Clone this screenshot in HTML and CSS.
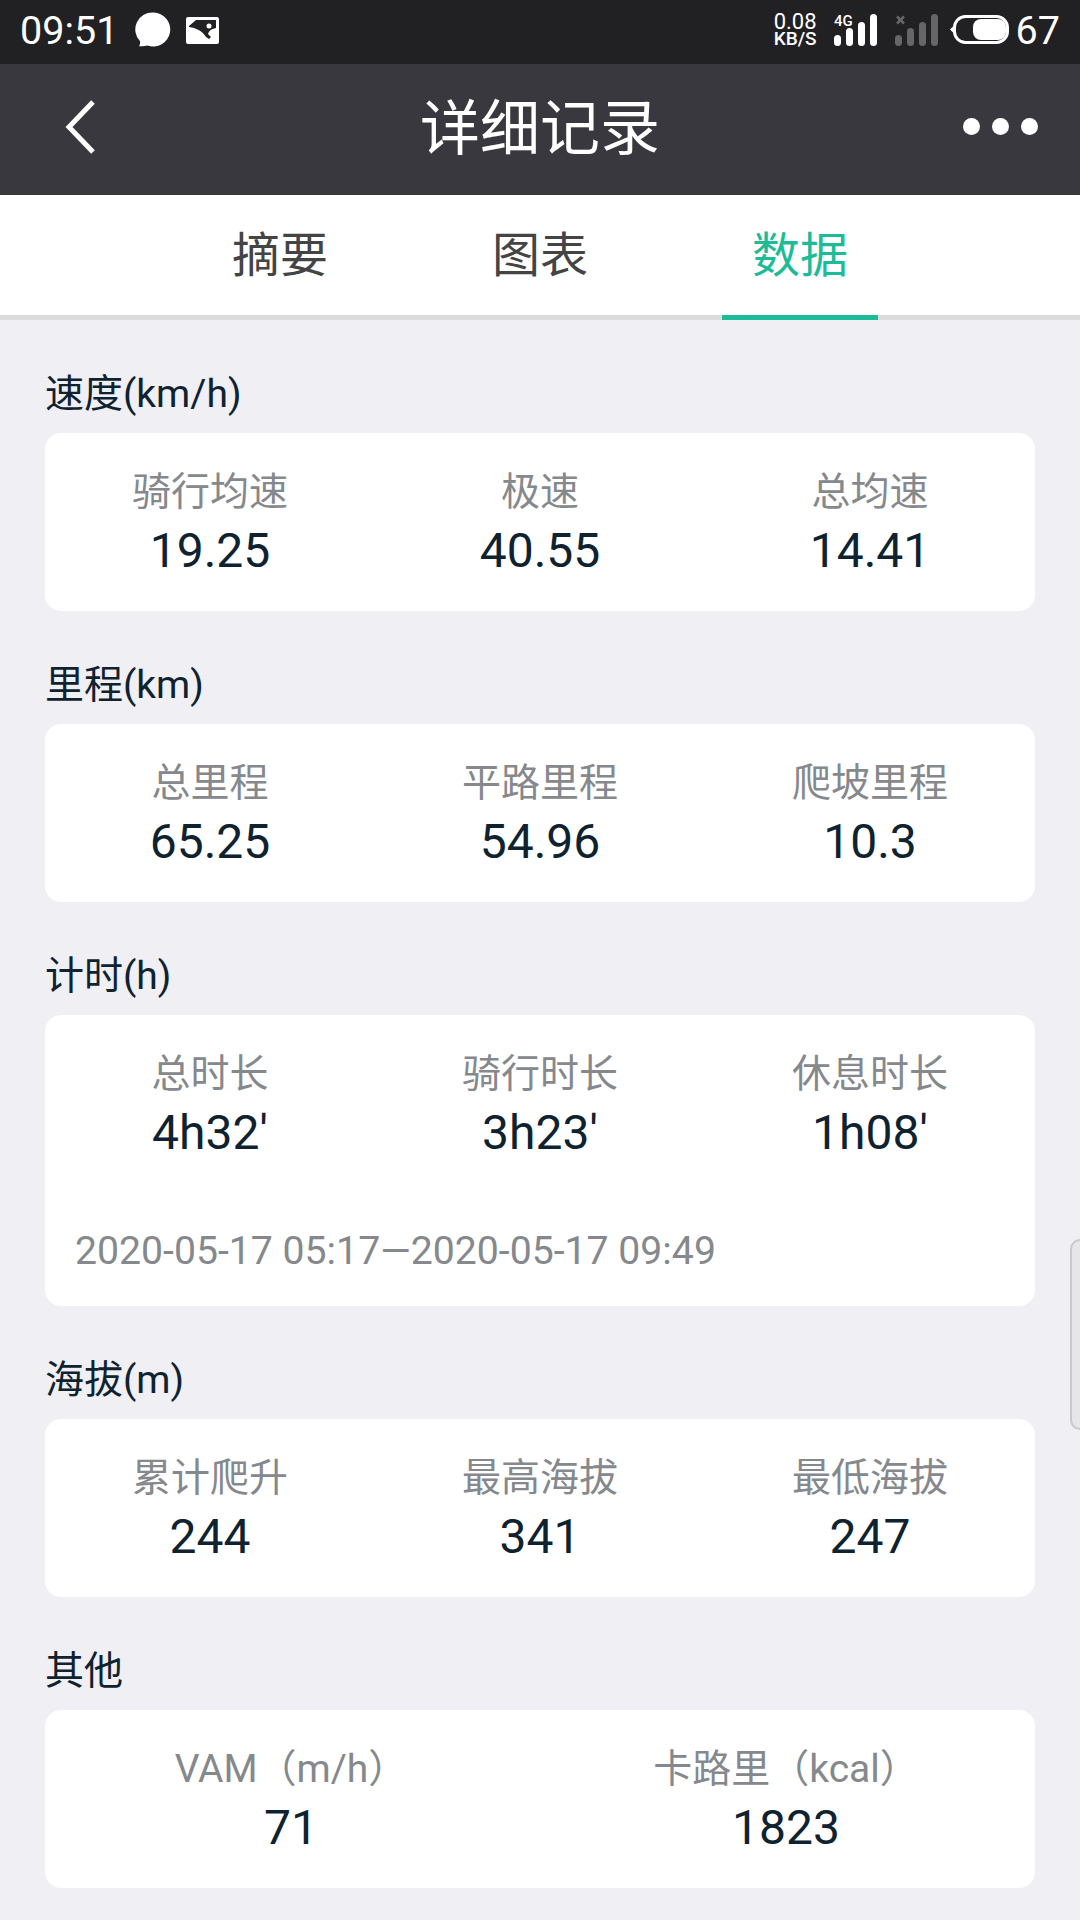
FILE: index.html
```html
<!DOCTYPE html>
<html lang="zh-CN">
<head>
    <meta charset="UTF-8">
    <meta name="viewport" content="width=device-width, initial-scale=1.0">
    <title>详细记录</title>
    <link rel="stylesheet" href="styles.css">
</head>
<body>
    <div class="status-bar">
        <div class="status-left">
            <span class="clock">09:51</span>
            <svg class="ic-msg" width="36" height="36" viewBox="0 0 36 36">
                <path d="M18.500 .5a17 17 0 1 1-6 33c-2 .6-5 .9-8.500 .7 1-1.400 1.300-3.200 1-5A17 17 0 0 1 18.500 .5z" fill="#fff"/>
            </svg>
            <svg class="ic-pic" width="33" height="27" viewBox="0 0 33 27">
                <path fill-rule="evenodd" fill="#fff" d="M2 0h29a2 2 0 0 1 2 2v23a2 2 0 0 1-2 2H2a2 2 0 0 1-2-2V2a2 2 0 0 1 2-2zM3 9v1c7 1 13 3.500 17 10l3 2 2-2-3-3c1-3 3-5 8-6V3H10z"/>
                <circle cx="23" cy="9" r="2.500" fill="#fff"/>
            </svg>
        </div>
        <div class="status-right">
            <div class="net-speed">
                <span>0.08</span>
                <span class="net-unit">KB/S</span>
            </div>
            <svg class="ic-sig" width="44" height="34" viewBox="0 0 44 34">
                <text x="0" y="13" class="sig-label">4G</text>
                <rect x="0" y="22" width="7" height="11" rx="3.500" fill="#fff"/>
                <rect x="12" y="15" width="7" height="18" rx="3.500" fill="#fff"/>
                <rect x="24" y="9" width="7" height="24" rx="3.500" fill="#fff"/>
                <rect x="36" y="1" width="7" height="32" rx="3.500" fill="#fff"/>
            </svg>
            <svg class="ic-sig" width="44" height="34" viewBox="0 0 44 34">
                <path d="M2 3.500l7 7M9 3.500l-7 7" stroke="#666" stroke-width="2.500"/>
                <rect x="0" y="22" width="7" height="11" rx="3.500" fill="#666"/>
                <rect x="12" y="15" width="7" height="18" rx="3.500" fill="#666"/>
                <rect x="24" y="9" width="7" height="24" rx="3.500" fill="#666"/>
                <rect x="36" y="1" width="7" height="32" rx="3.500" fill="#666"/>
            </svg>
            <svg class="ic-batt" width="60" height="32" viewBox="0 0 60 32">
                <rect x="4.500" y="2.500" width="53" height="26" rx="11" fill="none" stroke="#fff" stroke-width="3"/>
                <path d="M0 15.500l3.500-3.500v7z" fill="#fff"/>
                <rect x="23" y="5" width="33" height="21" rx="8" fill="#fff"/>
            </svg>
            <span class="batt-num">67</span>
        </div>
    </div>

    <div class="nav-bar">
        <svg class="nav-back" width="32" height="54" viewBox="0 0 32 54">
            <path d="M29 2L5 27l24 25" fill="none" stroke="#fff" stroke-width="5"/>
        </svg>
        <h1 class="nav-title">详细记录</h1>
        <div class="nav-more"><i></i><i></i><i></i></div>
    </div>

    <div class="tabs">
        <div class="tab">摘要</div>
        <div class="tab">图表</div>
        <div class="tab active">数据</div>
    </div>

    <div class="content">
        <h2 class="sec-title">速度(km/h)</h2>
        <div class="card">
            <div class="row">
                <div class="cell"><div class="label">骑行均速</div><div class="value">19.25</div></div>
                <div class="cell"><div class="label">极速</div><div class="value">40.55</div></div>
                <div class="cell"><div class="label">总均速</div><div class="value">14.41</div></div>
            </div>
        </div>

        <h2 class="sec-title">里程(km)</h2>
        <div class="card">
            <div class="row">
                <div class="cell"><div class="label">总里程</div><div class="value">65.25</div></div>
                <div class="cell"><div class="label">平路里程</div><div class="value">54.96</div></div>
                <div class="cell"><div class="label">爬坡里程</div><div class="value">10.3</div></div>
            </div>
        </div>

        <h2 class="sec-title">计时(h)</h2>
        <div class="card">
            <div class="row">
                <div class="cell"><div class="label">总时长</div><div class="value">4h32'</div></div>
                <div class="cell"><div class="label">骑行时长</div><div class="value">3h23'</div></div>
                <div class="cell"><div class="label">休息时长</div><div class="value">1h08'</div></div>
            </div>
            <div class="time-range">2020-05-17 05:17—2020-05-17 09:49</div>
        </div>

        <h2 class="sec-title">海拔(m)</h2>
        <div class="card">
            <div class="row">
                <div class="cell"><div class="label">累计爬升</div><div class="value">244</div></div>
                <div class="cell"><div class="label">最高海拔</div><div class="value">341</div></div>
                <div class="cell"><div class="label">最低海拔</div><div class="value">247</div></div>
            </div>
        </div>

        <h2 class="sec-title">其他</h2>
        <div class="card">
            <div class="row two">
                <div class="cell"><div class="label">VAM（m/h）</div><div class="value">71</div></div>
                <div class="cell"><div class="label">卡路里（kcal）</div><div class="value">1823</div></div>
            </div>
        </div>
    </div>

    <div class="side-handle"></div>
</body>
</html>
```

FILE: styles.css
```css
* {
    box-sizing: border-box;
}
html, body {
    margin: 0;
    padding: 0;
}
body {
    position: relative;
    width: 1080px;
    height: 1920px;
    overflow: hidden;
    background-color: #efeff4;
    font-family: Roboto, "Noto Sans CJK SC", sans-serif;
}

/* status bar */
.status-bar {
    height: 64px;
    background-color: #212123;
    color: #fff;
    display: flex;
    justify-content: space-between;
    align-items: center;
    padding: 0 20px 4px 20px;
}
.status-left, .status-right {
    display: flex;
    align-items: center;
}
.clock {
    font-size: 39.500px;
}
.ic-msg {
    margin-left: 17px;
}
.ic-pic {
    margin-left: 15px;
}
.net-speed {
    display: flex;
    flex-direction: column;
    align-items: flex-end;
    font-size: 22px;
    line-height: 17px;
}
.net-unit {
    font-weight: 500;
    font-size: 19px;
}
.ic-sig {
    margin-left: 17px;
}
.sig-label {
    font-size: 15px;
    font-weight: 500;
    fill: #fff;
}
.ic-batt {
    margin-left: 11px;
}
.batt-num {
    font-size: 39.500px;
    margin-left: 6px;
}

/* title bar */
.nav-bar {
    height: 131px;
    background-color: #38383e;
    display: grid;
    grid-template-columns: 1fr auto 1fr;
    align-items: center;
    padding: 0 42px 6px 42px;
}
.nav-back {
    margin-left: 22px;
}
.nav-title {
    margin: 7px 0 0;
    color: #fff;
    font-size: 60px;
    font-weight: 400;
    line-height: 80px;
}
.nav-more {
    justify-self: end;
    display: flex;
    gap: 12px;
}
.nav-more i {
    width: 17px;
    height: 17px;
    border-radius: 50%;
    background-color: #fff;
}

/* tabs */
.tabs {
    height: 125px;
    background-color: #fff;
    border-bottom: 5px solid #dcdcdc;
    display: flex;
    justify-content: center;
}
.tab {
    width: 156px;
    margin: 0 52px;
    height: 125px;
    line-height: 121px;
    text-align: center;
    font-size: 48px;
    color: #444;
}
.tab.active {
    color: #1dbb97;
    border-bottom: 5px solid #1dbb97;
}

/* sections */
.content {
    padding: 0 45px;
}
.sec-title {
    margin: 0;
    height: 113px;
    padding-top: 49px;
    font-size: 39px;
    line-height: 50px;
    font-weight: 400;
    color: #0f2230;
}
.card {
    background-color: #fff;
    border-radius: 16px;
    padding: 34px 0 0;
    min-height: 178px;
}
.row {
    display: grid;
    grid-template-columns: 330px 330px 330px;
}
.row.two {
    grid-template-columns: 492px 498px;
}
.cell {
    text-align: center;
}
.label {
    font-size: 39px;
    line-height: 50px;
    color: #85888c;
}
.value {
    font-size: 48px;
    line-height: 68px;
    color: #0f2230;
}
.time-range {
    margin-top: 59px;
    padding: 0 0 30px 30px;
    font-size: 39.200px;
    line-height: 50px;
    color: #85888c;
}

/* floating handle on the right edge */
.side-handle {
    position: absolute;
    top: 1239px;
    right: 0;
    width: 10px;
    height: 191px;
    background-color: #e6e6e9;
    border: 2px solid #c9c9cc;
    border-right: none;
    border-radius: 12px 0 0 12px;
}
```
